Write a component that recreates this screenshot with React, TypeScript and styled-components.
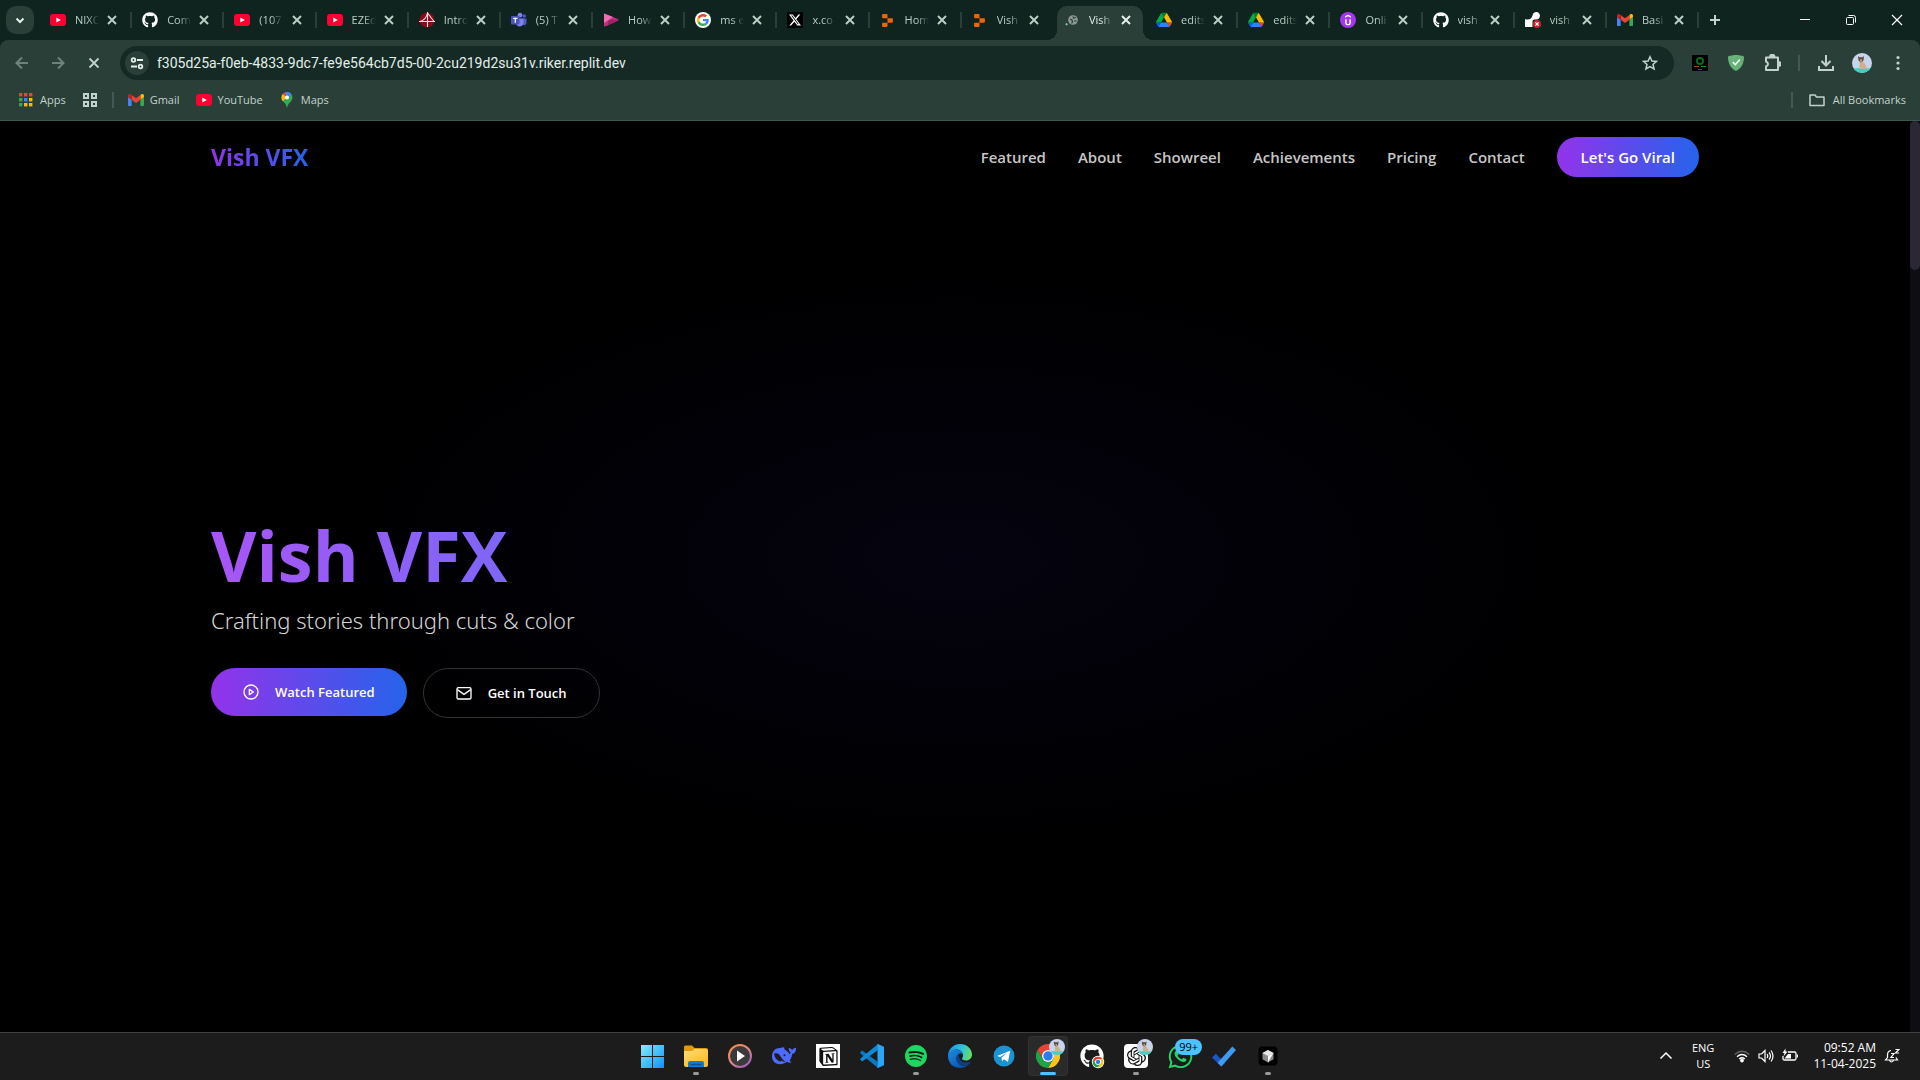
import React from 'react';
import styled, { createGlobalStyle, css } from 'styled-components';
import { SiRender, SiReplit, SiUdemy, SiOpenai, SiNotion, SiSpotify, SiX } from 'react-icons/si';
import { FaGithub, FaWhatsapp } from 'react-icons/fa6';

const FONT = '"Open Sans", "Noto Sans", sans-serif';
const FRAME = '#0f241f';
const TOOLBAR = '#2a3f38';
const ICON = '#c3d3cc';

const GlobalStyle = createGlobalStyle`
  *, *::before, *::after { box-sizing: border-box; }
  body { margin: 0; background: #000; font-family: ${FONT}; }
  button, input { font-family: inherit; }
  button { border: 0; padding: 0; background: none; color: inherit; cursor: pointer; }
  a { color: inherit; text-decoration: none; }
  svg { display: block; flex: none; }
`;

const Desktop = styled.div`
  display: flex;
  flex-direction: column;
  height: 100vh;
  overflow: hidden;
`;

/* ---------- browser frame ---------- */

const BrowserTop = styled.header`
  flex: none;
  background: ${FRAME};
`;

const TabStrip = styled.div`
  display: flex;
  align-items: center;
  height: 40px;
  padding-left: 6px;
`;

const TabSearch = styled.button`
  display: grid;
  place-items: center;
  flex: none;
  width: 28px;
  height: 28px;
  margin-right: 6px;
  border-radius: 10px;
  background: ${TOOLBAR};
  color: #e3efe9;
`;

const TabList = styled.div`
  display: flex;
  flex: 0 1 1659px;
  min-width: 0;
  height: 40px;
`;

const Tab = styled.div<{ $active?: boolean }>`
  position: relative;
  isolation: isolate;
  display: flex;
  align-items: center;
  flex: 1 1 0;
  min-width: 0;
  height: 40px;
  padding-left: 10px;
  color: ${(p) => (p.$active ? '#e3efe9' : '#b9cfc5')};
  ${(p) =>
    p.$active &&
    css`
      &::before {
        content: '';
        position: absolute;
        z-index: -1;
        inset: 6px 3px 0;
        border-radius: 10px 10px 0 0;
        background: ${TOOLBAR};
      }
      &::after {
        content: '';
        position: absolute;
        z-index: -1;
        left: -7px;
        right: -7px;
        bottom: 0;
        height: 10px;
        background:
          radial-gradient(circle at 0 0, transparent 10px, ${TOOLBAR} 10px) left / 10px 10px no-repeat,
          radial-gradient(circle at 100% 0, transparent 10px, ${TOOLBAR} 10px) right / 10px 10px no-repeat;
      }
    `}
`;

const TabTitle = styled.button`
  display: flex;
  align-items: center;
  gap: 9px;
  flex: 1;
  min-width: 0;
  height: 28px;
  font-size: 11px;
  line-height: 16px;
  white-space: nowrap;
`;

const Fade = styled.span`
  flex: 1;
  min-width: 0;
  overflow: hidden;
  text-align: left;
  mask-image: linear-gradient(to right, #000 12px, transparent 24px);
`;

const TabClose = styled.button`
  display: grid;
  place-items: center;
  flex: none;
  width: 16px;
  height: 16px;
  margin-right: 10px;
`;

const TabRule = styled.span<{ $hidden?: boolean }>`
  flex: none;
  width: 2px;
  height: 16px;
  background: ${(p) => (p.$hidden ? 'transparent' : TOOLBAR)};
`;

const NewTab = styled.button`
  display: grid;
  place-items: center;
  flex: none;
  width: 28px;
  height: 28px;
  margin-left: 2px;
  color: ${ICON};
`;

const WindowButtons = styled.div`
  display: flex;
  flex: none;
  margin-left: auto;
`;

const WindowButton = styled.button`
  display: grid;
  place-items: center;
  width: 46px;
  height: 40px;
  color: #fff;
`;

const ToolArea = styled.div`
  padding-top: 6px;
  border-radius: 8px 8px 0 0;
  background: ${TOOLBAR};
  border-bottom: 1px solid #41544d;
`;

const ToolRow = styled.div`
  display: flex;
  align-items: center;
  gap: 8px;
  padding: 0 8px;
`;

const ToolButton = styled.button<{ $dim?: boolean }>`
  display: grid;
  place-items: center;
  flex: none;
  width: 28px;
  height: 28px;
  color: ${(p) => (p.$dim ? '#71827b' : ICON)};
`;

const Omnibox = styled.div`
  display: flex;
  align-items: center;
  gap: 8px;
  flex: 1;
  min-width: 0;
  height: 34px;
  margin: 0 4px;
  padding: 0 10px 0 5px;
  border-radius: 17px;
  background: #152a25;
`;

const SiteInfo = styled.button`
  display: grid;
  place-items: center;
  flex: none;
  width: 24px;
  height: 24px;
  border-radius: 12px;
  background: ${TOOLBAR};
  color: #e3efe9;
`;

const Address = styled.input`
  flex: 1;
  min-width: 0;
  border: 0;
  outline: 0;
  padding: 0;
  background: transparent;
  color: #e3efe9;
  font: 14px/20px Roboto, ${FONT};
`;

const Rule = styled.span<{ $inset?: boolean }>`
  flex: none;
  width: 2px;
  height: 16px;
  margin: ${(p) => (p.$inset ? '0 4px' : '0')};
  background: #45594f;
`;

const BookmarkBar = styled.nav`
  display: flex;
  align-items: center;
  gap: 16px;
  height: 40px;
  padding: 0 14px 0 18px;
`;

const Bookmark = styled.a<{ $end?: boolean }>`
  display: flex;
  align-items: center;
  gap: ${(p) => (p.$end ? '8px' : '6px')};
  color: #c3d3cc;
  font-size: 11px;
  line-height: 16px;
`;

const BookmarkGroup = styled.div`
  display: flex;
  align-items: center;
  gap: 14px;
`;

const Spacer = styled.span`
  flex: 1;
`;

/* ---------- web page ---------- */

const Viewport = styled.div`
  display: flex;
  flex: 1;
  min-height: 0;
`;

const Page = styled.div`
  display: flex;
  flex-direction: column;
  flex: 1;
  min-width: 0;
  background: radial-gradient(ellipse 660px 310px at 50% 48%, #05030f, #020107 50%, #000 100%) #000;
`;

const Scrollbar = styled.div`
  flex: none;
  width: 10px;
  background: #0f0d14;
`;

const Thumb = styled.div`
  height: 149px;
  border-radius: 5px;
  background: #2b2833;
`;

const Container = styled.div`
  width: 100%;
  max-width: 1536px;
  margin: 0 auto;
  padding: 0 24px;
`;

const SiteHeader = styled(Container)`
  display: flex;
  align-items: center;
  justify-content: space-between;
  padding: 16px 24px;
`;

const Brand = styled.a`
  font-size: 23px;
  font-weight: 700;
  line-height: 32px;
  color: transparent;
  background: linear-gradient(to right, #9333ea, #2563eb);
  background-clip: text;
`;

const SiteNav = styled.nav`
  display: flex;
  align-items: center;
  gap: 32px;
  color: #c6c6c6;
  font-size: 15px;
  font-weight: 600;
  line-height: 24px;
`;

const pill = css`
  display: inline-flex;
  align-items: center;
  border-radius: 25px;
  color: #fff;
  font-weight: 600;
`;

const ViralLink = styled.a`
  ${pill}
  padding: 8px 24px;
  background: linear-gradient(to right, #9333ea, #2563eb);
`;

const Hero = styled.main`
  display: flex;
  flex: 1;
  align-items: center;
  padding-top: 12px;
`;

const HeroTitle = styled.h1`
  max-width: 768px;
  margin: 0 0 14px;
  font-size: 70px;
  font-weight: 700;
  line-height: 70px;
  color: transparent;
  background: linear-gradient(to right, #a855f7, #3b82f6);
  background-clip: text;
`;

const HeroText = styled.p`
  margin: 0 0 32px;
  color: #d4d4d4;
  font-family: "Noto Sans", sans-serif;
  font-size: 22px;
  font-weight: 300;
  line-height: 32px;
`;

const Actions = styled.div`
  display: flex;
  align-items: flex-start;
  gap: 16px;
`;

const Action = styled.a<{ $outline?: boolean }>`
  ${pill}
  gap: 16px;
  padding: 14px 32px;
  font-size: 13px;
  line-height: 20px;
  ${(p) =>
    p.$outline
      ? css`border: 1px solid #333;`
      : css`background: linear-gradient(to right, #9333ea, #2563eb);`}
`;

/* ---------- taskbar ---------- */

const Taskbar = styled.footer`
  display: grid;
  grid-template-columns: 1fr auto 1fr;
  flex: none;
  height: 48px;
  padding-bottom: 1px;
  border-top: 1px solid #404040;
  background: #1c1c1c;
  color: #fff;
`;

const TaskList = styled.div`
  grid-column: 2;
  display: flex;
  align-items: center;
  gap: 4px;
`;

const TaskButton = styled.button<{ $active?: boolean }>`
  position: relative;
  display: grid;
  place-items: center;
  width: 40px;
  height: 40px;
  border-radius: 4px;
  ${(p) => p.$active && css`background: #2a2a2a; box-shadow: inset 0 0 0 1px #323232;`}
`;

const Running = styled.span<{ $active?: boolean }>`
  position: absolute;
  bottom: 1px;
  left: 50%;
  transform: translateX(-50%);
  width: ${(p) => (p.$active ? '16px' : '6px')};
  height: 3px;
  border-radius: 2px;
  background: ${(p) => (p.$active ? '#4cc2ff' : '#9a9a9a')};
`;

const ProfileBadge = styled.span`
  position: absolute;
  top: 3px;
  right: 3px;
`;

const CountBadge = styled.span`
  position: absolute;
  top: 3px;
  right: -2px;
  padding: 0 4px;
  border-radius: 8px;
  background: #4cc2ff;
  color: #000;
  font-size: 11px;
  line-height: 16px;
`;

const NotionTile = styled.span`
  display: grid;
  place-items: center;
  width: 24px;
  height: 24px;
  background: #fff;
  color: #111;
`;

const GptTile = styled(NotionTile)`
  border-radius: 4px;
`;

const Tray = styled.div`
  display: flex;
  align-items: center;
  justify-content: flex-end;
  padding-right: 20px;
`;

const TrayButton = styled.button<{ $gap: number }>`
  display: flex;
  align-items: center;
  gap: 8px;
  margin-left: ${(p) => p.$gap}px;
  font-size: 11px;
  line-height: 16px;
`;

const Stack = styled.span<{ $end?: boolean }>`
  display: flex;
  flex-direction: column;
  align-items: ${(p) => (p.$end ? 'flex-end' : 'center')};
  font-size: ${(p) => (p.$end ? '12px' : '11px')};
`;

/* ---------- drawings ---------- */

type StrokeProps = { size?: number; width?: number; box?: number; children: React.ReactNode };
const Stroke = ({ size = 16, width = 2, box = 16, children }: StrokeProps) => (
  <svg width={size} height={size} viewBox={`0 0 ${box} ${box}`} fill="none" stroke="currentColor" strokeWidth={width}>
    {children}
  </svg>
);

const CrossIcon = () => (
  <Stroke width={2}><path d="M4 4l8 8M12 4l-8 8" /></Stroke>
);

const YouTube = () => (
  <svg width="16" height="16" viewBox="0 0 16 16">
    <rect y="2" width="16" height="12" rx="3" fill="#ff0033" />
    <path d="M6.3 5.5v5L10.8 8z" fill="#fff" />
  </svg>
);

const Gmail = () => (
  <svg width="16" height="16" viewBox="52 31 88 88">
    <path fill="#4285f4" d="M58 108h14V74L52 59v43c0 3.32 2.69 6 6 6" />
    <path fill="#34a853" d="M120 108h14c3.32 0 6-2.69 6-6V59l-20 15" />
    <path fill="#fbbc04" d="M120 48v26l20-15v-8c0-7.42-8.47-11.65-14.4-7.2" />
    <path fill="#ea4335" d="M72 74V48l24 18 24-18v26L96 92" />
    <path fill="#c5221f" d="M52 51v8l20 15V48l-5.6-4.2c-5.94-4.45-14.4-.22-14.4 7.2" />
  </svg>
);

const Drive = () => (
  <svg width="16" height="16" viewBox="0 -4 87.3 87.3">
    <path fill="#0066da" d="m6.6 66.85 3.85 6.65c.8 1.4 1.95 2.5 3.3 3.3l13.75-23.8h-27.5c0 1.55.4 3.1 1.2 4.5z" />
    <path fill="#00ac47" d="m43.65 25-13.75-23.8c-1.35.8-2.5 1.9-3.3 3.3l-25.4 44a9.06 9.06 0 0 0 -1.2 4.5h27.5z" />
    <path fill="#ea4335" d="m73.55 76.8c1.35-.8 2.5-1.9 3.3-3.3l1.6-2.75 7.65-13.25c.8-1.4 1.2-2.95 1.2-4.5h-27.5l5.85 11.5z" />
    <path fill="#00832d" d="m43.65 25 13.75-23.8c-1.35-.8-2.9-1.2-4.5-1.2h-18.5c-1.6 0-3.15.45-4.5 1.2z" />
    <path fill="#2684fc" d="m59.8 53h-32.3l-13.75 23.8c1.35.8 2.9 1.2 4.5 1.2h50.8c1.6 0 3.15-.45 4.5-1.2z" />
    <path fill="#ffba00" d="m73.4 26.5-12.7-22c-.8-1.4-1.95-2.5-3.3-3.3l-13.75 23.8 16.15 28h27.45c0-1.55-.4-3.1-1.2-4.5z" />
  </svg>
);

const Google = () => (
  <svg width="16" height="16" viewBox="-8 -8 64 64">
    <circle cx="24" cy="24" r="32" fill="#fff" />
    <path fill="#ea4335" d="M24 9.5c3.54 0 6.71 1.22 9.21 3.6l6.85-6.85C35.9 2.38 30.47 0 24 0 14.62 0 6.51 5.38 2.56 13.22l7.98 6.19C12.43 13.72 17.74 9.5 24 9.5z" />
    <path fill="#4285f4" d="M46.98 24.55c0-1.57-.15-3.09-.38-4.55H24v9.02h12.94c-.58 2.96-2.26 5.48-4.78 7.18l7.73 6c4.51-4.18 7.09-10.36 7.09-17.65z" />
    <path fill="#fbbc05" d="M10.53 28.59c-.48-1.45-.76-2.99-.76-4.59s.27-3.14.76-4.59l-7.98-6.19C.92 16.46 0 20.12 0 24c0 3.88.92 7.54 2.56 10.78l7.97-6.19z" />
    <path fill="#34a853" d="M24 48c6.48 0 11.93-2.13 15.89-5.81l-7.73-6c-2.15 1.45-4.92 2.3-8.16 2.3-6.26 0-11.57-4.22-13.47-9.91l-7.98 6.19C6.51 42.62 14.62 48 24 48z" />
  </svg>
);

const CourseMark = () => (
  <svg width="16" height="16" viewBox="0 0 16 16">
    <circle cx="8" cy="8" r="7.5" fill="#8a0a1c" />
    <path d="M8.500 0v15M0 9.500h16M8.500 1L15 9.500M1 9.500Q7 8 8.500 1" fill="none" stroke="#f3dfe2" strokeWidth="1.100" />
  </svg>
);

const Teams = () => (
  <svg width="16" height="16" viewBox="0 0 16 16">
    <circle cx="13.300" cy="4" r="1.700" fill="#5059c9" />
    <path d="M11 6.500h4.500v4.200a2.400 2.400 0 0 1-4 1.800z" fill="#5059c9" />
    <circle cx="9" cy="3.200" r="2.400" fill="#7b83eb" />
    <path d="M5 6.500h7.500v4.500a3.900 3.900 0 0 1-7.500 1z" fill="#7b83eb" />
    <rect y="4" width="8.500" height="8.500" rx="1" fill="#4b53bc" />
    <path d="M2.200 6.300h4.200M4.300 6.300v4.500" stroke="#fff" strokeWidth="1.200" />
  </svg>
);

const StreamMark = () => (
  <svg width="16" height="16" viewBox="0 0 16 16">
    <path d="M1 1.500l14 5.500q1 .8 0 1.700L2 14.500q-1 .3-1-1z" fill="#c2307c" />
    <path d="M1 1.500l9 3.500L1 11z" fill="#ee6fb4" />
    <path d="M6 8l9.500-.5L4 14z" fill="#a01f66" />
  </svg>
);

const XMark = () => (
  <svg width="16" height="16" viewBox="0 0 16 16">
    <rect width="16" height="16" fill="#000" />
    <g transform="translate(2 2)"><SiX size={12} color="#fff" /></g>
  </svg>
);

const LoadingGlobe = () => (
  <svg width="16" height="16" viewBox="0 0 16 16">
    <circle cx="9" cy="8" r="4.800" fill="#8f9a9a" />
    <path d="M6 7l2 1 .5 2-1 1.500M9 4.500l.5 1.500 2.500-.5M10 9h2.500" fill="none" stroke={TOOLBAR} strokeWidth="1.200" />
    <path d="M2 11.500l1.200 1.500" fill="none" stroke="#6fd6ad" strokeWidth="2" />
  </svg>
);

const Udemy = () => (
  <svg width="16" height="16" viewBox="0 0 16 16">
    <circle cx="8" cy="8" r="8" fill="#a435f0" />
    <g transform="translate(2.500 2.500)"><SiUdemy size={11} color="#fff" /></g>
  </svg>
);

const RenderFailed = () => (
  <svg width="16" height="16" viewBox="0 0 16 16" overflow="visible">
    <SiRender size={15} color="#fff" />
    <circle cx="12" cy="12" r="4" fill="#c9202f" />
    <path d="M10.400 10.400l3.200 3.200m0-3.200l-3.200 3.200" stroke="#fff" strokeWidth="1.200" />
  </svg>
);

const AppsGrid = () => {
  const colours = ['#ea4335', '#ea4335', '#ea4335', '#34a853', '#4285f4', '#fbbc04', '#34a853', '#fbbc04', '#fbbc04'];
  return (
    <svg width="16" height="16" viewBox="0 0 16 16">
      {colours.map((c, i) => (
        <rect key={i} x={1 + (i % 3) * 5} y={1 + Math.floor(i / 3) * 5} width="3.400" height="3.400" fill={c} />
      ))}
    </svg>
  );
};

const TabGroups = () => (
  <Stroke width={2}><path d="M2 2h4v4H2zM10 2h4v4h-4zM2 10h4v4H2zM10 10h4v4h-4z" /></Stroke>
);

const MapsPin = () => (
  <svg width="16" height="16" viewBox="0 0 16 16">
    <path d="M8 0a5.500 5.500 0 0 0-5.500 5.500C2.500 9.500 7 10.500 8 16c1-5.500 5.500-6.500 5.500-10.500A5.500 5.500 0 0 0 8 0z" fill="#34a853" />
    <path d="M8 5.500L3.700 9.200A6 6 0 0 1 2.500 5.500 5 5 0 0 1 3.800 2z" fill="#fbbc04" />
    <path d="M8 5.500L3.800 2A5.500 5.500 0 0 1 6.500.2L9 3z" fill="#ea4335" />
    <path d="M6.300.3A5.500 5.500 0 0 1 12.500 2.400L8 7.500z" fill="#4285f4" />
    <circle cx="8" cy="5.500" r="2" fill="#fff" />
  </svg>
);

const FolderIcon = () => (
  <Stroke width={1.5}><path d="M1 3h5l1.500 2H15v8.500H1z" strokeLinejoin="round" /></Stroke>
);

const ForestExtension = () => (
  <svg width="16" height="16" viewBox="0 0 16 16">
    <rect width="16" height="16" fill="#000" />
    <circle cx="8" cy="6" r="3" fill="none" stroke="#0a6b1c" strokeWidth="2" />
    <path d="M2 11.500h5" stroke="#a5480c" /><path d="M9 11.500h5" stroke="#0c8a2a" />
    <path d="M6 14.500h4" stroke="#5c4a10" />
  </svg>
);

const Shield = () => (
  <svg width="16" height="16" viewBox="0 0 16 16">
    <path d="M8 0c2.500 0 5.500.5 8 1.500C16 9 13 13.500 8 16 3 13.500 0 9 0 1.500 2.500.5 5.500 0 8 0z" fill="#67b279" />
    <path d="M4.800 7l2.500 2.700L11.800 4.600" fill="none" stroke="#fff" strokeWidth="1.500" />
  </svg>
);

const Avatar = ({ size }: { size: number }) => (
  <svg width={size} height={size} viewBox="0 0 20 20">
    <defs><clipPath id="face"><circle cx="10" cy="10" r="10" /></clipPath></defs>
    <g clipPath="url(#face)">
      <rect width="20" height="20" fill="#c9d3ea" />
      <path d="M0 15.500q10-1 20 0V20H0z" fill="#45cfc4" />
      <path d="M7.500 8q1.500 1 3 .5 4 3 4.500 7.500H7.500z" fill="#c9b28c" />
      <path d="M6 3l1.500 1.200h3L12 3l-.5 4.500L9 9.500 6.500 7.500z" fill="#5c4a3c" />
      <path d="M8 6.500h2l-1 3z" fill="#e4d6b8" />
    </g>
  </svg>
);

const Windows = () => (
  <svg width="24" height="24" viewBox="0 0 24 24">
    <defs>
      <linearGradient id="win" x1="0" y1="0" x2="24" y2="24" gradientUnits="userSpaceOnUse">
        <stop stopColor="#8cf0ff" /><stop offset="1" stopColor="#0a93f5" />
      </linearGradient>
    </defs>
    <path d="M1 1h11v11H1zM13 1h11v11H13zM1 13h11v11H1zM13 13h11v11H13z" fill="url(#win)" />
  </svg>
);

const Explorer = () => (
  <svg width="24" height="24" viewBox="0 0 24 24">
    <defs>
      <linearGradient id="fold" x1="0" y1="4" x2="10" y2="24" gradientUnits="userSpaceOnUse">
        <stop stopColor="#ffe07a" /><stop offset="1" stopColor="#fdbb2a" />
      </linearGradient>
    </defs>
    <path d="M0 3q0-1.500 1.500-1.500H8L10.500 4H22q2 0 2 2v3H0z" fill="#e29a0b" />
    <path d="M0 7h8l2.500-2H22q2 0 2 2v14q0 2-2 2H2q-2 0-2-2z" fill="url(#fold)" />
    <path d="M4 23v-4q0-2 2-2h12q2 0 2 2v4z" fill="#1479cf" />
    <path d="M7 20.500h10" stroke="#0a4f96" strokeWidth="1.500" strokeLinecap="round" />
  </svg>
);

const Media = () => (
  <svg width="24" height="24" viewBox="0 0 24 24">
    <defs>
      <linearGradient id="ring" x1="4" y1="2" x2="20" y2="22" gradientUnits="userSpaceOnUse">
        <stop stopColor="#f98b4b" /><stop offset=".5" stopColor="#dd8a86" /><stop offset="1" stopColor="#a35ac2" />
      </linearGradient>
    </defs>
    <circle cx="12" cy="12" r="11" fill="#3a3a3c" stroke="url(#ring)" strokeWidth="2" />
    <path d="M9 6.500v11l8-5.500z" fill="#fff" />
  </svg>
);

const Whale = () => (
  <svg width="24" height="24" viewBox="0 0 24 24" fill="#4d6bfe">
    <path d="M0 12.500C0 7 4 3.500 8.500 4c1.500-1 3.500-.8 4-.2-.5.700-.4 1.300.5 2 2 1.200 3.500 2.700 4.200 4.200 1-.3 1.300-1 1.200-2-1.200-1-1.800-2.300-1.600-4 1.600.2 2.700.9 3.400 2 .7-1.200 2-2 3.800-2.200.2 3.700-1.200 5.700-4 6.500-.2 2.700-1 4.700-2.500 6.200.6.900 1.200 1.300 2.200 1.500-1.500 1-3.300.8-4.600-.2C8.500 22.500 0 20 0 12.500z" />
    <path d="M2.200 9.500c3-.8 4.800.2 6.300 2.700 1.500 2.400 3 4.300 5 5.300-1.500.4-2.800.1-3.800-1-.6 1-1.500 1.200-2.700.6C4.200 15.700 2.200 13 2.200 9.500z" fill="#1c1c1c" />
    <circle cx="12.500" cy="11.200" r="1" fill="#1c1c1c" />
  </svg>
);

const VSCode = () => (
  <svg width="24" height="24" viewBox="0 0 24 24">
    <path d="M17.500 0L24 3v18l-6.500 3z" fill="#2aa7f4" />
    <path d="M0 8.500l2.200-2L18 18v6L1 10z" fill="#0a78c4" />
    <path d="M0 15.500l2.200 2L18 6V0L1 14z" fill="#1089d6" />
    <path d="M17.500 0L24 3v18l-6.500 3L18 18V6z" fill="#2aa7f4" />
  </svg>
);

const Edge = () => (
  <svg width="24" height="24" viewBox="0 0 24 24">
    <defs>
      <linearGradient id="edgeTop" x1="2" y1="6" x2="23" y2="12" gradientUnits="userSpaceOnUse">
        <stop stopColor="#1f9fe6" /><stop offset=".5" stopColor="#2fc0dc" /><stop offset="1" stopColor="#66df62" />
      </linearGradient>
      <linearGradient id="edgeLow" x1="0" y1="8" x2="14" y2="24" gradientUnits="userSpaceOnUse">
        <stop stopColor="#1a8ade" /><stop offset="1" stopColor="#0b4fa8" />
      </linearGradient>
    </defs>
    <path d="M0 11C1 4 6 0 12 0c7 0 12 5 12 10.500 0 3.500-2.500 6-6 6-2.500 0-4-1-4-2 0-.7 1-1.200 1-3C15 8 12 5.500 8.500 5.500 4.500 5.500 1.500 7.500 0 11z" fill="url(#edgeTop)" />
    <path d="M0 12c0-4 3.500-6.500 8-6.500 3.500 0 6 2 6.800 4.500C12.500 8.500 8.500 10 8.500 14.500c0 5 5 9 11.500 6.500-2 2-5 3-8 3C5 24 0 19 0 12z" fill="url(#edgeLow)" />
    <path d="M8.500 14.500c0-2 .8-3.500 2.300-4.300-.3 5 3 8.300 7.500 8.300 1.500 0 3-.4 4-1 .6-.3.900.1.600.6-.7 1.200-1.700 2.200-2.900 2.900-6 2-11.500-1.500-11.500-6.500z" fill="#0d3f86" />
  </svg>
);

const Telegram = () => (
  <svg width="24" height="24" viewBox="0 0 24 24">
    <circle cx="12" cy="12" r="10.500" fill="#1c93d1" />
    <path d="M5 12l12.500-5q.8-.2.6.8l-2 9.500q-.2.700-.9.300l-3.200-2.300-1.600 1.500q-.4.300-.5-.3l-.4-2.800 5.500-5-6.800 4.300-3-.9q-.6-.2-.2-.1z" fill="#fff" />
  </svg>
);

const Chrome = ({ size = 24 }: { size?: number }) => (
  <svg width={size} height={size} viewBox="0 0 24 24">
    <path d="M1.600 6A12 12 0 0 1 22.400 6H12A6 6 0 0 0 6.800 15z" fill="#ea4335" />
    <path d="M22.400 6A12 12 0 0 1 12 24l5.200-9A6 6 0 0 0 12 6z" fill="#fcc41f" />
    <path d="M1.600 6l5.200 9a6 6 0 0 0 10.400 0L12 24A12 12 0 0 1 1.600 6z" fill="#1ea446" />
    <circle cx="12" cy="12" r="6" fill="#fff" />
    <circle cx="12" cy="12" r="4.700" fill="#2b7bf3" />
  </svg>
);

const GithubApp = () => (
  <svg width="24" height="24" viewBox="0 0 24 24" overflow="visible">
    <FaGithub size={24} color="#fff" />
    <circle cx="18" cy="18" r="6.200" fill="#fff" />
    <g transform="translate(12.500 12.500)"><Chrome size={11} /></g>
  </svg>
);

const Todo = () => (
  <svg width="24" height="24" viewBox="0 0 24 24">
    <path d="M0 13.500l3.800-3.800 9.200 9.200-3.800 3.600z" fill="#1857c4" />
    <path d="M5.600 18.700L20.300 2.500l3.700 3.600L9.300 22.500z" fill="#3f9bef" />
  </svg>
);

const Cursor = () => (
  <svg width="24" height="24" viewBox="0 0 24 24">
    <rect x="2.500" y="2.500" width="19" height="19" rx="4" fill="#000" />
    <path d="M12 6l5.500 3v6.200L12 18.500l-5.500-3.300V9z" fill="#8b8b8b" />
    <path d="M12 6l5.500 3L12 12 6.500 9z" fill="#e6e6e6" />
    <path d="M17.500 9L12 18.500V12z" fill="#fafafa" />
  </svg>
);

const PlayCircle = () => (
  <Stroke box={24}><circle cx="12" cy="12" r="10.500" /><path d="M9.500 8l6 4-6 4z" strokeLinejoin="round" /></Stroke>
);

const Mail = () => (
  <Stroke box={24}><rect x="1.500" y="4" width="21" height="17" rx="2" /><path d="M2 7l10 7 10-7" /></Stroke>
);

/* ---------- data ---------- */

const Octo = () => <FaGithub size={16} color="#fff" />;
const Replit = () => <SiReplit size={13} color="#f26207" />;

const FavSlot = styled.span`
  display: grid;
  place-items: center;
  flex: none;
  width: 16px;
  height: 16px;
`;

const tabs: { title: string; Icon: React.FC; active?: boolean }[] = [
  { title: 'NIXO', Icon: YouTube },
  { title: 'Com', Icon: Octo },
  { title: '(107', Icon: YouTube },
  { title: 'EZEd', Icon: YouTube },
  { title: 'Intro', Icon: CourseMark },
  { title: '(5) T', Icon: Teams },
  { title: 'How', Icon: StreamMark },
  { title: 'ms e', Icon: Google },
  { title: 'x.co', Icon: XMark },
  { title: 'Hom', Icon: Replit },
  { title: 'Vish', Icon: Replit },
  { title: 'Vish', Icon: LoadingGlobe, active: true },
  { title: 'edits', Icon: Drive },
  { title: 'edits', Icon: Drive },
  { title: 'Onli', Icon: Udemy },
  { title: 'vish', Icon: Octo },
  { title: 'vish', Icon: RenderFailed },
  { title: 'Basi', Icon: Gmail },
];

const links = ['Featured', 'About', 'Showreel', 'Achievements', 'Pricing', 'Contact'];

const apps: { name: string; icon: React.ReactNode; running?: boolean; active?: boolean; profile?: boolean; count?: string }[] = [
  { name: 'Start', icon: <Windows /> },
  { name: 'File Explorer', icon: <Explorer />, running: true },
  { name: 'Media Player', icon: <Media /> },
  { name: 'DeepSeek', icon: <Whale /> },
  { name: 'Notion', icon: <NotionTile><SiNotion size={19} /></NotionTile> },
  { name: 'Visual Studio Code', icon: <VSCode /> },
  { name: 'Spotify', icon: <SiSpotify size={22} color="#1ed760" />, running: true },
  { name: 'Edge', icon: <Edge /> },
  { name: 'Telegram', icon: <Telegram /> },
  { name: 'Chrome', icon: <Chrome />, running: true, active: true, profile: true },
  { name: 'GitHub', icon: <GithubApp /> },
  { name: 'ChatGPT', icon: <GptTile><SiOpenai size={19} /></GptTile>, running: true, profile: true },
  { name: 'WhatsApp', icon: <FaWhatsapp size={27} color="#25d366" />, count: '99+' },
  { name: 'To Do', icon: <Todo /> },
  { name: 'Cursor', icon: <Cursor />, running: true },
];

/* ---------- sections ---------- */

const Browser = () => {
  const activeIndex = tabs.findIndex((t) => t.active);
  return (
    <BrowserTop>
      <TabStrip>
        <TabSearch aria-label="Search tabs"><Stroke><path d="M4.500 6.500L8 10l3.500-3.500" /></Stroke></TabSearch>
        <TabList>
          {tabs.map(({ title, Icon, active }, i) => (
            <Tab key={i} $active={active}>
              <TabTitle><FavSlot><Icon /></FavSlot><Fade>{title}</Fade></TabTitle>
              <TabClose aria-label="Close tab"><CrossIcon /></TabClose>
              <TabRule $hidden={i === activeIndex || i === activeIndex - 1} />
            </Tab>
          ))}
        </TabList>
        <NewTab aria-label="New tab"><Stroke><path d="M8 3v10M3 8h10" /></Stroke></NewTab>
        <WindowButtons>
          <WindowButton aria-label="Minimize"><Stroke width={1}><path d="M3 7.500h10" /></Stroke></WindowButton>
          <WindowButton aria-label="Restore">
            <Stroke width={1}><rect x="3.500" y="5.500" width="7" height="7" rx="1" /><path d="M5.500 3.500h5q2 0 2 2v5" /></Stroke>
          </WindowButton>
          <WindowButton aria-label="Close"><Stroke width={1.2}><path d="M3 3l10 10M13 3L3 13" /></Stroke></WindowButton>
        </WindowButtons>
      </TabStrip>
      <ToolArea>
        <ToolRow>
          <ToolButton $dim aria-label="Back"><Stroke><path d="M14 8H3M8 2.500L2.500 8 8 13.500" /></Stroke></ToolButton>
          <ToolButton $dim aria-label="Forward"><Stroke><path d="M2 8h11M8 2.500L13.500 8 8 13.500" /></Stroke></ToolButton>
          <ToolButton aria-label="Stop"><Stroke width={1.8}><path d="M3.500 3.500l9 9M12.500 3.500l-9 9" /></Stroke></ToolButton>
          <Omnibox>
            <SiteInfo aria-label="Site information">
              <Stroke width={1.8}><circle cx="4.500" cy="5" r="1.800" /><path d="M8 5h6M2 11.500h6" /><circle cx="11.500" cy="11.500" r="1.800" /></Stroke>
            </SiteInfo>
            <Address aria-label="Address" defaultValue="f305d25a-f0eb-4833-9dc7-fe9e564cb7d5-00-2cu219d2su31v.riker.replit.dev" />
            <ToolButton aria-label="Bookmark this page">
              <Stroke width={1.5}><path d="M8 1.800l1.900 4.200 4.600.4-3.500 3 1.100 4.500L8 11.500l-4.100 2.400L5 9.400l-3.500-3 4.600-.4z" /></Stroke>
            </ToolButton>
          </Omnibox>
          <ToolButton aria-label="Extension"><ForestExtension /></ToolButton>
          <ToolButton aria-label="Ad blocker"><Shield /></ToolButton>
          <ToolButton aria-label="Extensions">
            <svg width="18" height="18" viewBox="0 0 18 18" fill="none" stroke="currentColor" strokeWidth="2">
              <path d="M3 3.500h12v12.500H3v-3.500q2-.8 2-2.500t-2-2.500z" strokeLinejoin="round" />
              <path d="M7 3a2 2 0 0 1 4.500 0zM15.500 8a2 2 0 0 1 0 4z" fill="currentColor" />
            </svg>
          </ToolButton>
          <Rule $inset />
          <ToolButton aria-label="Downloads"><Stroke><path d="M8 0v10M3.500 6L8 10.500 12.500 6M1 11v4h14v-4" /></Stroke></ToolButton>
          <ToolButton aria-label="Profile"><Avatar size={20} /></ToolButton>
          <ToolButton aria-label="Menu">
            <svg width="16" height="16" viewBox="0 0 16 16" fill="currentColor">
              <circle cx="8" cy="2.500" r="1.600" /><circle cx="8" cy="8" r="1.600" /><circle cx="8" cy="13.500" r="1.600" />
            </svg>
          </ToolButton>
        </ToolRow>
        <BookmarkBar>
          <Bookmark href="#apps"><AppsGrid />Apps</Bookmark>
          <BookmarkGroup>
            <Bookmark href="#groups" aria-label="Tab groups"><TabGroups /></Bookmark>
            <Rule />
            <Bookmark href="#gmail"><Gmail />Gmail</Bookmark>
          </BookmarkGroup>
          <Bookmark href="#youtube"><YouTube />YouTube</Bookmark>
          <Bookmark href="#maps"><MapsPin />Maps</Bookmark>
          <Spacer />
          <Rule />
          <Bookmark $end href="#all"><FolderIcon />All Bookmarks</Bookmark>
        </BookmarkBar>
      </ToolArea>
    </BrowserTop>
  );
};

const Site = () => (
  <Viewport>
    <Page>
      <SiteHeader as="header">
        <Brand href="#top">Vish VFX</Brand>
        <SiteNav>
          {links.map((l) => <a key={l} href={`#${l.toLowerCase()}`}>{l}</a>)}
          <ViralLink href="#contact">Let's Go Viral</ViralLink>
        </SiteNav>
      </SiteHeader>
      <Hero>
        <Container>
          <HeroTitle>Vish VFX</HeroTitle>
          <HeroText>Crafting stories through cuts &amp; color</HeroText>
          <Actions>
            <Action href="#featured"><PlayCircle />Watch Featured</Action>
            <Action href="#contact" $outline><Mail />Get in Touch</Action>
          </Actions>
        </Container>
      </Hero>
    </Page>
    <Scrollbar><Thumb /></Scrollbar>
  </Viewport>
);

const SystemBar = () => (
  <Taskbar>
    <TaskList>
      {apps.map((a) => (
        <TaskButton key={a.name} $active={a.active} aria-label={a.name}>
          {a.icon}
          {a.profile && <ProfileBadge><Avatar size={16} /></ProfileBadge>}
          {a.count && <CountBadge>{a.count}</CountBadge>}
          {a.running && <Running $active={a.active} />}
        </TaskButton>
      ))}
    </TaskList>
    <Tray>
      <TrayButton $gap={0} aria-label="Hidden icons"><Stroke width={1.5}><path d="M2.500 10.500L8 5l5.500 5.500" /></Stroke></TrayButton>
      <TrayButton $gap={18}><Stack><span>ENG</span><span>US</span></Stack></TrayButton>
      <TrayButton $gap={20} aria-label="Network, volume and battery">
        <Stroke width={1.4}>
          <path d="M.8 6.500q7.200-6.500 14.400 0" stroke="#666" />
          <path d="M3 8.700q5-4.500 10 0M5.200 11q2.800-2.500 5.600 0" />
          <circle cx="8" cy="12.500" r="1.200" fill="currentColor" />
        </Stroke>
        <Stroke width={1.2}>
          <path d="M1 6h2.500L7 2.500v11L3.500 10H1zM9 6q1.500 2 0 4M11 4.500q3 3.500 0 7M13 2.500q4 5.500 0 11" />
        </Stroke>
        <Stroke width={1.3}>
          <path d="M6 4h6.500q1.500 0 1.500 1.500v5q0 1.500-1.500 1.500h-10Q1 12 1 10.500V8" /><path d="M15.500 6.500v3" />
          <path d="M6 6h3v4.500H2.500z" fill="currentColor" stroke="none" />
          <path d="M3.500.5L.5 5h2L1.500 8.500 5.500 3.500h-2z" fill="currentColor" stroke="none" />
        </Stroke>
      </TrayButton>
      <TrayButton $gap={15}><Stack $end><span>09:52 AM</span><span>11-04-2025</span></Stack></TrayButton>
      <TrayButton $gap={8} aria-label="Notifications">
        <Stroke width={1.2}>
          <path d="M7 2.500Q3.500 3 3.500 7v2.500L1.500 12h12l-1.500-2.500M5.500 12.500q2 3 4 0" />
          <path d="M7 5.500h3L7 9.500h3M11.500 1.500H15L11.500 5H15" />
        </Stroke>
      </TrayButton>
    </Tray>
  </Taskbar>
);

export default function App() {
  return (
    <Desktop>
      <GlobalStyle />
      <Browser />
      <Site />
      <SystemBar />
    </Desktop>
  );
}
